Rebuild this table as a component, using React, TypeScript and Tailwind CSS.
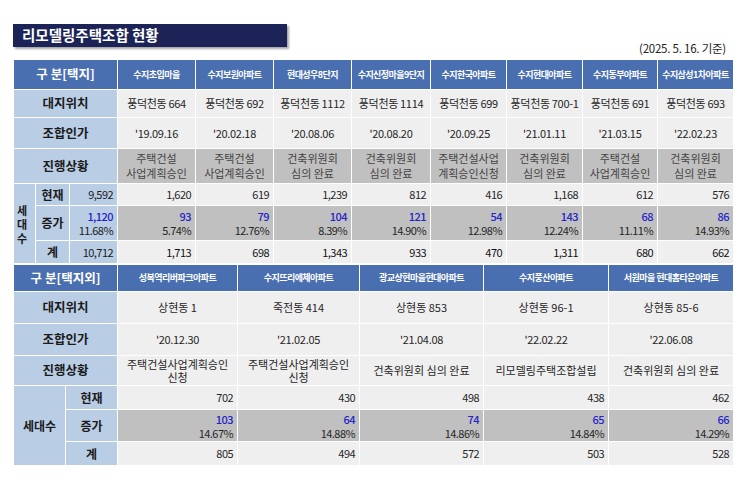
const apts1 = [
  { name: '수지초입마을', addr: '풍덕천동 664', date: "'19.09.16", status: ['주택건설', '사업계획승인'], now: '1,620', inc: '93', pct: '5.74%', total: '1,713' },
  { name: '수지보원아파트', addr: '풍덕천동 692', date: "'20.02.18", status: ['주택건설', '사업계획승인'], now: '619', inc: '79', pct: '12.76%', total: '698' },
  { name: '현대성우8단지', addr: '풍덕천동 1112', date: "'20.08.06", status: ['건축위원회', '심의 완료'], now: '1,239', inc: '104', pct: '8.39%', total: '1,343' },
  { name: '수지신정마을9단지', addr: '풍덕천동 1114', date: "'20.08.20", status: ['건축위원회', '심의 완료'], now: '812', inc: '121', pct: '14.90%', total: '933' },
  { name: '수지한국아파트', addr: '풍덕천동 699', date: "'20.09.25", status: ['주택건설사업', '계획승인신청'], now: '416', inc: '54', pct: '12.98%', total: '470' },
  { name: '수지현대아파트', addr: '풍덕천동 700-1', date: "'21.01.11", status: ['건축위원회', '심의 완료'], now: '1,168', inc: '143', pct: '12.24%', total: '1,311' },
  { name: '수지동부아파트', addr: '풍덕천동 691', date: "'21.03.15", status: ['주택건설', '사업계획승인'], now: '612', inc: '68', pct: '11.11%', total: '680' },
  { name: '수지삼성1차아파트', addr: '풍덕천동 693', date: "'22.02.23", status: ['건축위원회', '심의 완료'], now: '576', inc: '86', pct: '14.93%', total: '662' },
];

const apts2 = [
  { name: '성복역리버파크아파트', addr: '상현동 1', date: "'20.12.30", status: ['주택건설사업계획승인', '신청'], now: '702', inc: '103', pct: '14.67%', total: '805' },
  { name: '수지뜨리에체아파트', addr: '죽전동 414', date: "'21.02.05", status: ['주택건설사업계획승인', '신청'], now: '430', inc: '64', pct: '14.88%', total: '494' },
  { name: '광교상현마을현대아파트', addr: '상현동 853', date: "'21.04.08", status: ['건축위원회 심의 완료'], now: '498', inc: '74', pct: '14.86%', total: '572' },
  { name: '수지풍산아파트', addr: '상현동 96-1', date: "'22.02.22", status: ['리모델링주택조합설립'], now: '438', inc: '65', pct: '14.84%', total: '503' },
  { name: '서원마을 현대홈타운아파트', addr: '상현동 85-6', date: "'22.06.08", status: ['건축위원회 심의 완료'], now: '462', inc: '66', pct: '14.29%', total: '528' },
];

const w1 = [78, 78, 78, 79, 76, 76, 75, 76];
const w2 = [120, 122, 124, 125, 125];

// shared cell styles
const hd = 'border border-white bg-[#4a6fb0] text-white font-bold text-[9px] tracking-[-0.06em] text-center whitespace-nowrap overflow-hidden';
const lb = 'border border-white bg-[#b9cde5] text-[#1a1a1a] font-bold text-[12.5px] text-center';
const cl = 'border border-white bg-[#efefef] text-[#262626] text-[11px] text-center';
const gr = 'border border-white bg-[#c0c0c0] text-[#333] text-[11px]';
const num = 'border border-white bg-[#efefef] text-[#262626] text-[11px] text-right pr-1 tracking-[-0.05em]';
const blue = 'text-[#2424c8] font-medium';

export default function App() {
  return (
    <div className="w-[756px] h-[478px] bg-white font-['Noto_Sans_CJK_KR',sans-serif] relative">
      <div className="pt-6 pl-[13px]">
        <div className="w-[274px] h-[23px] bg-[#1b2357] shadow-[2px_2px_2px_rgba(0,0,0,0.35)] flex items-center pl-[9px]">
          <span className="text-white font-bold text-[14.5px] leading-none">리모델링주택조합 현황</span>
        </div>
      </div>
      <div className="flex justify-end pr-[30px] mt-[-8px] h-[15px] items-end">
        <span className="text-[11.5px] leading-none text-[#222] tracking-[-0.02em]">(2025. 5. 16. 기준)</span>
      </div>

      <div className="pl-[13px] mt-[5px]">
        <table className="table-fixed border-collapse w-[720px]">
          <colgroup>
            <col className="w-[22px]" />
            <col className="w-[34px]" />
            <col className="w-[48px]" />
            {w1.map((w, i) => (
              <col key={i} style={{ width: w }} />
            ))}
          </colgroup>
          <tbody>
            <tr className="h-[30px]">
              <td colSpan={3} className={hd + ' !text-[12.5px] !tracking-normal'}>구 분[택지]</td>
              {apts1.map((a) => (
                <td key={a.name} className={hd}>{a.name}</td>
              ))}
            </tr>
            <tr className="h-[28px]">
              <td colSpan={3} className={lb}>대지위치</td>
              {apts1.map((a) => (
                <td key={a.name} className={cl + ' tracking-[-0.03em]'}>{a.addr}</td>
              ))}
            </tr>
            <tr className="h-[31px]">
              <td colSpan={3} className={lb}>조합인가</td>
              {apts1.map((a) => (
                <td key={a.name} className={cl + ' tracking-[-0.03em]'}>{a.date}</td>
              ))}
            </tr>
            <tr className="h-[35px]">
              <td colSpan={3} className={lb}>진행상황</td>
              {apts1.map((a) => (
                <td key={a.name} className={gr + ' text-center leading-[15px] text-[#444]'}>
                  {a.status.map((s) => (
                    <div key={s}>{s}</div>
                  ))}
                </td>
              ))}
            </tr>
            <tr className="h-[22px]">
              <td rowSpan={3} className={lb + ' !text-[11px] leading-[14px] text-left pl-[3px]'}>
                <div>세</div>
                <div>대</div>
                <div>수</div>
              </td>
              <td className={lb + ' !text-[12px]'}>현재</td>
              <td className={lb + ' !font-normal !text-[11px] text-right pr-1 tracking-[-0.05em]'}>9,592</td>
              {apts1.map((a) => (
                <td key={a.name} className={num}>{a.now}</td>
              ))}
            </tr>
            <tr className="h-[35px]">
              <td className={lb + ' !text-[12px]'}>증가</td>
              <td className={lb + ' !font-normal !text-[11px] text-right pr-1 leading-[14px] tracking-[-0.05em]'}>
                <div className={blue}>1,120</div>
                <div>11.68%</div>
              </td>
              {apts1.map((a) => (
                <td key={a.name} className={gr + ' text-right pr-1 leading-[14px] text-[#262626] tracking-[-0.05em]'}>
                  <div className={blue}>{a.inc}</div>
                  <div>{a.pct}</div>
                </td>
              ))}
            </tr>
            <tr className="h-[23px]">
              <td className={lb + ' !text-[12px]'}>계</td>
              <td className={lb + ' !font-normal !text-[11px] text-right pr-1 tracking-[-0.05em]'}>10,712</td>
              {apts1.map((a) => (
                <td key={a.name} className={num + ' !text-[#111]'}>{a.total}</td>
              ))}
            </tr>
          </tbody>
        </table>

        <table className="table-fixed border-collapse w-[720px]">
          <colgroup>
            <col className="w-[52px]" />
            <col className="w-[52px]" />
            {w2.map((w, i) => (
              <col key={i} style={{ width: w }} />
            ))}
          </colgroup>
          <tbody>
            <tr className="h-[27px]">
              <td colSpan={2} className={hd + ' !text-[12.5px] !tracking-normal'}>구 분[택지외]</td>
              {apts2.map((a) => (
                <td key={a.name} className={hd}>{a.name}</td>
              ))}
            </tr>
            <tr className="h-[32px]">
              <td colSpan={2} className={lb}>대지위치</td>
              {apts2.map((a) => (
                <td key={a.name} className={cl}>{a.addr}</td>
              ))}
            </tr>
            <tr className="h-[32px]">
              <td colSpan={2} className={lb}>조합인가</td>
              {apts2.map((a) => (
                <td key={a.name} className={cl + ' tracking-[-0.03em]'}>{a.date}</td>
              ))}
            </tr>
            <tr className="h-[30px]">
              <td colSpan={2} className={lb}>진행상황</td>
              {apts2.map((a) => (
                <td key={a.name} className={cl + ' leading-[13px]'}>
                  {a.status.map((s) => (
                    <div key={s}>{s}</div>
                  ))}
                </td>
              ))}
            </tr>
            <tr className="h-[24px]">
              <td rowSpan={3} className={lb + ' !text-[12px]'}>세대수</td>
              <td className={lb + ' !text-[12px]'}>현재</td>
              {apts2.map((a) => (
                <td key={a.name} className={num}>{a.now}</td>
              ))}
            </tr>
            <tr className="h-[32px]">
              <td className={lb + ' !text-[12px]'}>증가</td>
              {apts2.map((a) => (
                <td key={a.name} className={gr + ' text-right pr-1 leading-[14px] text-[#262626] tracking-[-0.05em]'}>
                  <div className={blue}>{a.inc}</div>
                  <div>{a.pct}</div>
                </td>
              ))}
            </tr>
            <tr className="h-[24px]">
              <td className={lb + ' !text-[12px]'}>계</td>
              {apts2.map((a) => (
                <td key={a.name} className={num}>{a.total}</td>
              ))}
            </tr>
          </tbody>
        </table>
      </div>
    </div>
  );
}
